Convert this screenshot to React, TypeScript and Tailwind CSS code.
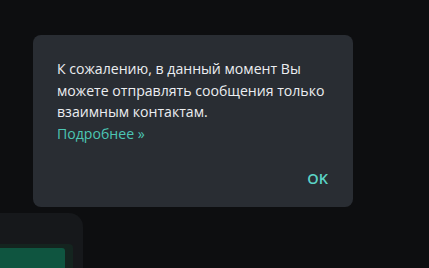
export default function App() {
  return (
    <div
      className="relative w-[429px] h-[268px] overflow-hidden bg-[#0d0e10]"
      style={{ fontFamily: '"Open Sans", "Noto Sans", sans-serif' }}
    >
      <div className="absolute left-0 top-[213px] w-[83px] h-[80px] rounded-tr-[14px] bg-[#16181b]">
        <div className="mt-[31px] w-[73px] h-[40px] rounded-tr-[4px] bg-[#14241f] pt-[4px] pr-[8px]">
          <div className="w-full h-full rounded-tr-[3px] bg-[#0f5540]" />
        </div>
      </div>
      <div className="absolute left-[33px] top-[35px] w-[320px] h-[172px] rounded-[8px] bg-[#292d33] flex flex-col">
        <div className="pl-[24px] pr-[20px] pt-[23px] text-[14.1px] leading-[21.5px] text-[#eceef1]">
          <p>
            К сожалению, в данный момент Вы
            <br />
            можете отправлять сообщения только
            <br />
            взаимным контактам.
          </p>
          <p className="text-[#4cc6b4]">Подробнее »</p>
        </div>
        <div className="flex justify-end pr-[25px] mt-[25px]">
          <span className="text-[14.5px] leading-[20px] font-semibold text-[#5bd3c6]">OK</span>
        </div>
      </div>
    </div>
  );
}
